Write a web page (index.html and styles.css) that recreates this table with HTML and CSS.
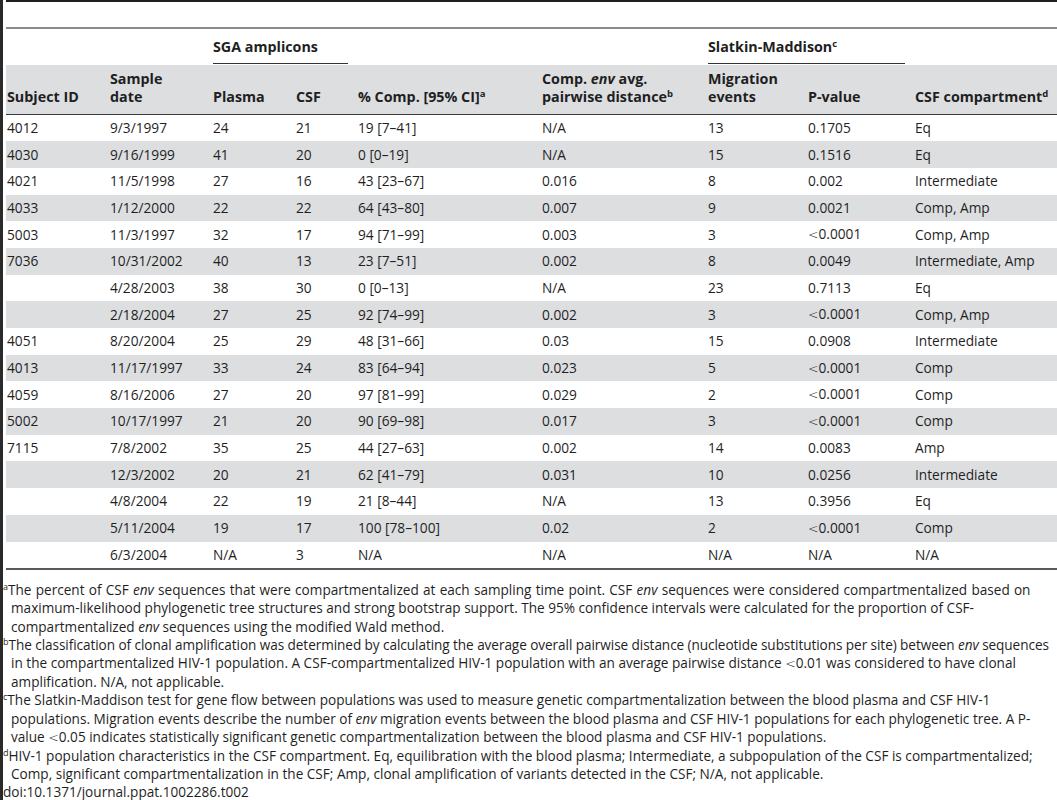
FILE: index.html
```html
<!DOCTYPE html>
<html>

<head>
	<meta charset="utf-8">
	<meta name="viewport" content="width=device-width">
	<title>Table 2</title>
	<link rel="stylesheet" href="styles.css">
</head>

<body>
	<div class="Frame">
		<div class="TopBar"></div>
		<table class="Data">
			<colgroup>
				<col class="c1"><col class="c2"><col class="c3"><col class="c4"><col class="c5">
				<col class="c6"><col class="c7"><col class="c8"><col class="c9">
			</colgroup>
			<thead>
				<tr class="Group">
					<th></th>
					<th></th>
					<th colspan="2"><span class="Span">SGA amplicons</span></th>
					<th></th>
					<th></th>
					<th colspan="2"><span class="Span">Slatkin-Maddison<sup>c</sup></span></th>
					<th></th>
				</tr>
				<tr class="Head">
					<th>Subject ID</th>
					<th>Sample<br>date</th>
					<th>Plasma</th>
					<th>CSF</th>
					<th>% Comp. [95% CI]<sup>a</sup></th>
					<th>Comp. <i>env</i> avg.<br>pairwise distance<sup>b</sup></th>
					<th>Migration<br>events</th>
					<th>P-value</th>
					<th>CSF compartment<sup>d</sup></th>
				</tr>
			</thead>
			<tbody>
				<tr><td>4012</td><td>9/3/1997</td><td>24</td><td>21</td><td>19 [7–41]</td><td>N/A</td><td>13</td><td>0.1705</td><td>Eq</td></tr>
				<tr><td>4030</td><td>9/16/1999</td><td>41</td><td>20</td><td>0 [0–19]</td><td>N/A</td><td>15</td><td>0.1516</td><td>Eq</td></tr>
				<tr><td>4021</td><td>11/5/1998</td><td>27</td><td>16</td><td>43 [23–67]</td><td>0.016</td><td>8</td><td>0.002</td><td>Intermediate</td></tr>
				<tr><td>4033</td><td>1/12/2000</td><td>22</td><td>22</td><td>64 [43–80]</td><td>0.007</td><td>9</td><td>0.0021</td><td>Comp, Amp</td></tr>
				<tr><td>5003</td><td>11/3/1997</td><td>32</td><td>17</td><td>94 [71–99]</td><td>0.003</td><td>3</td><td><span class="lt">&lt;</span>0.0001</td><td>Comp, Amp</td></tr>
				<tr><td>7036</td><td>10/31/2002</td><td>40</td><td>13</td><td>23 [7–51]</td><td>0.002</td><td>8</td><td>0.0049</td><td>Intermediate, Amp</td></tr>
				<tr><td></td><td>4/28/2003</td><td>38</td><td>30</td><td>0 [0–13]</td><td>N/A</td><td>23</td><td>0.7113</td><td>Eq</td></tr>
				<tr><td></td><td>2/18/2004</td><td>27</td><td>25</td><td>92 [74–99]</td><td>0.002</td><td>3</td><td><span class="lt">&lt;</span>0.0001</td><td>Comp, Amp</td></tr>
				<tr><td>4051</td><td>8/20/2004</td><td>25</td><td>29</td><td>48 [31–66]</td><td>0.03</td><td>15</td><td>0.0908</td><td>Intermediate</td></tr>
				<tr><td>4013</td><td>11/17/1997</td><td>33</td><td>24</td><td>83 [64–94]</td><td>0.023</td><td>5</td><td><span class="lt">&lt;</span>0.0001</td><td>Comp</td></tr>
				<tr><td>4059</td><td>8/16/2006</td><td>27</td><td>20</td><td>97 [81–99]</td><td>0.029</td><td>2</td><td><span class="lt">&lt;</span>0.0001</td><td>Comp</td></tr>
				<tr><td>5002</td><td>10/17/1997</td><td>21</td><td>20</td><td>90 [69–98]</td><td>0.017</td><td>3</td><td><span class="lt">&lt;</span>0.0001</td><td>Comp</td></tr>
				<tr><td>7115</td><td>7/8/2002</td><td>35</td><td>25</td><td>44 [27–63]</td><td>0.002</td><td>14</td><td>0.0083</td><td>Amp</td></tr>
				<tr><td></td><td>12/3/2002</td><td>20</td><td>21</td><td>62 [41–79]</td><td>0.031</td><td>10</td><td>0.0256</td><td>Intermediate</td></tr>
				<tr><td></td><td>4/8/2004</td><td>22</td><td>19</td><td>21 [8–44]</td><td>N/A</td><td>13</td><td>0.3956</td><td>Eq</td></tr>
				<tr><td></td><td>5/11/2004</td><td>19</td><td>17</td><td>100 [78–100]</td><td>0.02</td><td>2</td><td><span class="lt">&lt;</span>0.0001</td><td>Comp</td></tr>
				<tr><td></td><td>6/3/2004</td><td>N/A</td><td>3</td><td>N/A</td><td>N/A</td><td>N/A</td><td>N/A</td><td>N/A</td></tr>
			</tbody>
		</table>

		<div class="Notes">
			<p><sup>a</sup><span class="Wide">The percent of CSF <i>env</i> sequences that were compartmentalized at each sampling time point. CSF <i>env</i> sequences were considered compartmentalized based on</span><br>
				maximum-likelihood phylogenetic tree structures and strong bootstrap support. The 95% confidence intervals were calculated for the proportion of CSF-<br>
				compartmentalized <i>env</i> sequences using the modified Wald method.</p>
			<p><sup>b</sup><span class="Tight">The classification of clonal amplification was determined by calculating the average overall pairwise distance (nucleotide substitutions per site) between <i>env</i> sequences</span><br>
				in the compartmentalized HIV-1 population. A CSF-compartmentalized HIV-1 population with an average pairwise distance <span class="lt">&lt;</span>0.01 was considered to have clonal<br>
				amplification. N/A, not applicable.</p>
			<p><sup>c</sup>The Slatkin-Maddison test for gene flow between populations was used to measure genetic compartmentalization between the blood plasma and CSF HIV-1<br>
				populations. Migration events describe the number of <i>env</i> migration events between the blood plasma and CSF HIV-1 populations for each phylogenetic tree. A P-<br>
				value <span class="lt">&lt;</span>0.05 indicates statistically significant genetic compartmentalization between the blood plasma and CSF HIV-1 populations.</p>
			<p><sup>d</sup>HIV-1 population characteristics in the CSF compartment. Eq, equilibration with the blood plasma; Intermediate, a subpopulation of the CSF is compartmentalized;<br>
				Comp, significant compartmentalization in the CSF; Amp, clonal amplification of variants detected in the CSF; N/A, not applicable.</p>
			<div class="Doi">doi:10.1371/journal.ppat.1002286.t002</div>
		</div>
	</div>
</body>

</html>
```

FILE: styles.css
```css
html, body {
	margin: 0;
	padding: 0;
	background: #fff;
	color: #1f1f1f;
	font-family: "Open Sans", "Liberation Sans", sans-serif;
	font-size: 13px;
}

.Frame {
	border-left: 3px solid #2a2a2a;
	min-height: 800px;
	box-sizing: border-box;
}

.TopBar {
	height: 2px;
	margin-left: 3px;
	background: #1e1e1e;
}

/* main table */
.Data {
	margin-left: 3px;
	margin-top: 25px;
	width: 1051px;
	border-collapse: collapse;
	table-layout: fixed;
	border-top: 2px solid #8b8b8b;
	border-bottom: 2px solid #5a5a5a;
}

.c1 { width: 103px; }
.c2 { width: 103px; }
.c3 { width: 83px; }
.c4 { width: 62px; }
.c5 { width: 184px; }
.c6 { width: 166px; }
.c7 { width: 100px; }
.c8 { width: 107px; }
.c9 { width: 143px; }

th, td {
	text-align: left;
	padding: 0 0 0 1px;
	white-space: nowrap;
}

th {
	font-weight: 700;
	font-size: 14.3px;
	line-height: 17.7px;
	vertical-align: bottom;
}

.Group th {
	height: 36px;
	padding-right: 9px;
}

.Span {
	display: block;
	padding-bottom: 7px;
	margin-bottom: 1px;
	border-bottom: 1px solid #333;
}

.Head {
	background: #dddedf;
}

.Head th {
	height: 49px;
	padding-bottom: 8px;
	box-sizing: border-box;
	border-bottom: 1px solid #3c3c3c;
}

sup {
	font-size: 9.5px;
	line-height: 0;
	vertical-align: 5px;
}

td {
	height: 26.7px;
	font-size: 13.7px;
	line-height: 18px;
	vertical-align: middle;
}

tbody tr:nth-child(even) {
	background: #dddedf;
}

.lt {
	font-family: "DejaVu Sans", sans-serif;
	font-weight: 200;
	font-size: 12.5px;
}

/* footnotes */
.Notes {
	margin-top: 11px;
	line-height: 18.2px;
	font-size: 13.6px;
}

.Notes p {
	margin: 0;
	padding-left: 8px;
	text-indent: -8px;
	white-space: nowrap;
}

.Notes sup {
	font-size: 9px;
	vertical-align: 5px;
}

.Wide {
	word-spacing: 0.7px;
}

.Tight {
	letter-spacing: -0.07px;
}

.Doi {
	margin: 0;
}
```
